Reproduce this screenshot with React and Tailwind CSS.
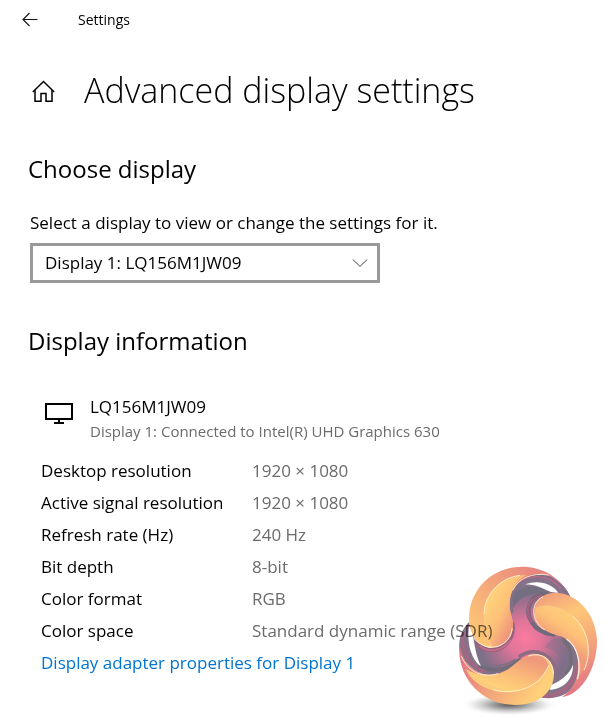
import { useState } from 'react';

const DISPLAYS = [{ id: '1', label: 'Display 1: LQ156M1JW09' }];

const DISPLAY_INFO = [
  { label: 'Desktop resolution', value: '1920 × 1080' },
  { label: 'Active signal resolution', value: '1920 × 1080' },
  { label: 'Refresh rate (Hz)', value: '240 Hz' },
  { label: 'Bit depth', value: '8-bit' },
  { label: 'Color format', value: 'RGB' },
  { label: 'Color space', value: 'Standard dynamic range (SDR)' },
];

function BackIcon() {
  return (
    <svg className="w-4 h-4" viewBox="0 0 16 16" fill="none" stroke="#111" strokeWidth="1.1">
      <path d="M15.5 7.5H1M7.5 1L1 7.5L7.5 14" />
    </svg>
  );
}

function HomeIcon() {
  return (
    <svg className="w-6 h-6" viewBox="0 0 24 24" fill="none" stroke="#000" strokeWidth="1.5">
      <path d="M.8 14L11.5 3.5L22.2 14" />
      <path d="M3 12V23.2H9V15.5H14V23.2H20V12" />
    </svg>
  );
}

function MonitorIcon() {
  return (
    <svg className="w-[30px] h-6" viewBox="0 0 30 24" fill="none" stroke="#000" strokeWidth="2">
      <path d="M2 3H28V18H2Z" />
      <path d="M15 18V22M10 22H20" />
    </svg>
  );
}

// Three-blade swirl laid over the bottom right corner
function SwirlLogo() {
  return (
    <svg className="w-[164px] h-[168px]" viewBox="0 0 492 504" fill="none" aria-hidden="true">
      <defs>
        <radialGradient id="core" gradientUnits="userSpaceOnUse" cx="255" cy="265" r="165">
          <stop offset="0" stopColor="#fb7a9f" />
          <stop offset=".3" stopColor="#e2759a" />
          <stop offset=".6" stopColor="#a9708f" />
          <stop offset=".85" stopColor="#7d6f89" />
          <stop offset="1" stopColor="#857489" />
        </radialGradient>
        <linearGradient id="rimA" gradientUnits="userSpaceOnUse" x1="320" y1="60" x2="100" y2="230">
          <stop offset="0" stopColor="#e77f81" />
          <stop offset=".4" stopColor="#f09a7c" />
          <stop offset="1" stopColor="#fdc477" />
        </linearGradient>
        <linearGradient id="lobeA" gradientUnits="userSpaceOnUse" x1="140" y1="170" x2="225" y2="215">
          <stop offset="0" stopColor="#ffd07a" />
          <stop offset=".5" stopColor="#fdc078" />
          <stop offset="1" stopColor="#f0967b" />
        </linearGradient>
        <linearGradient id="rimB" gradientUnits="userSpaceOnUse" x1="310" y1="140" x2="430" y2="420">
          <stop offset="0" stopColor="#f3a07c" />
          <stop offset=".25" stopColor="#fec778" />
          <stop offset=".55" stopColor="#f6aa7a" />
          <stop offset="1" stopColor="#e37584" />
        </linearGradient>
        <linearGradient id="lobeB" gradientUnits="userSpaceOnUse" x1="400" y1="190" x2="345" y2="275">
          <stop offset="0" stopColor="#ffcf7a" />
          <stop offset=".5" stopColor="#fdc178" />
          <stop offset="1" stopColor="#f09b7b" />
        </linearGradient>
        <linearGradient id="rimC" gradientUnits="userSpaceOnUse" x1="65" y1="310" x2="280" y2="450">
          <stop offset="0" stopColor="#e07483" />
          <stop offset=".45" stopColor="#f09d7c" />
          <stop offset="1" stopColor="#ffd079" />
        </linearGradient>
        <linearGradient id="lobeC" gradientUnits="userSpaceOnUse" x1="260" y1="325" x2="225" y2="425">
          <stop offset="0" stopColor="#f09a7c" />
          <stop offset=".6" stopColor="#fbbd78" />
          <stop offset="1" stopColor="#ffd07a" />
        </linearGradient>
        <radialGradient id="shadow">
          <stop offset="0" stopColor="#555" />
          <stop offset=".35" stopColor="#888" stopOpacity=".8" />
          <stop offset=".7" stopColor="#bbb" stopOpacity=".4" />
          <stop offset="1" stopColor="#fff" stopOpacity="0" />
        </radialGradient>
      </defs>

      <ellipse cx="208" cy="464" rx="145" ry="34" fill="url(#shadow)" />

      {/* core and the dark arms */}
      <g strokeLinecap="round">
        <path
          d="M88 215C65 235 52 275 60 305C85 365 140 390 200 370L300 442C340 452 385 435 408 405C450 350 435 280 360 240L390 138C370 95 330 68 285 68C230 72 200 120 208 180L205 270L150 294C110 285 88 250 88 215Z"
          fill="url(#core)"
        />
        <path d="M216 185C205 140 228 90 285 78C330 73 370 105 385 138" stroke="#82708a" strokeWidth="9" />
        <path d="M218 145C232 108 280 94 335 132C290 124 245 128 218 175Z" fill="#746f80" />
        <path d="M222 110C250 75 320 65 360 112" stroke="#b56a88" strokeWidth="5" />
        <path d="M318 133C270 132 252 180 276 217C290 241 310 250 340 254" stroke="#73697d" strokeWidth="13" />
        <path d="M306 137C257 145 256 190 275 215" stroke="#a7607f" strokeWidth="6" />
        <path d="M218 222C225 275 180 311 135 298C105 290 90 260 86 230" stroke="#96647f" strokeWidth="12" />
        <path d="M211 270C185 310 140 305 120 289" stroke="#c96b89" strokeWidth="5" />
        <path d="M238 330C205 362 158 366 120 350" stroke="#706c79" strokeWidth="12" />
        <path d="M225 330C205 343 180 352 150 346" stroke="#847085" strokeWidth="7" />
        <path d="M70 250C60 300 88 350 135 365" stroke="#a66583" strokeWidth="9" />
        <path d="M240 318C285 290 340 310 350 370" stroke="#8b6c82" strokeWidth="10" />
        <path d="M315 292C370 305 375 350 348 395C400 370 405 305 368 268C350 260 330 265 315 292Z" fill="#7c708a" opacity=".4" />
        <path d="M370 270C399 298 400 345 380 370" stroke="#746e79" strokeWidth="10" />
        <path d="M312 437C355 443 408 405 412 340" stroke="#a36883" strokeWidth="12" />
      </g>

      {/* gaps between the arms */}
      <path d="M255 103C295 89 334 99 355 128C320 131 312 105 255 103Z" fill="#fff" />
      <path d="M87 228C80 275 92 328 123 349C106 315 103 275 98 252C95 240 90 232 87 228Z" fill="#fff" />
      <path d="M399 344C387 377 357 394 334 405L329 419C365 419 401 391 399 344Z" fill="#fff" />

      {/* upper left blade */}
      <path
        d="M388 136C362 82 306 50 245 50C150 52 85 125 87 210C90 259 118 291 154 293C196 290 221 255 219 225C218 199 208 192 209 158C213 105 254 66 312 72C344 80 370 104 388 136Z"
        fill="url(#rimA)"
      />
      <path
        d="M260 75C180 76 131 135 132 197C133 235 142 264 155 290C196 290 221 255 219 225C218 199 208 192 209 158C211 115 235 86 260 75Z"
        fill="url(#lobeA)"
      />
      <path d="M240 76C180 84 134 132 132 192" stroke="#fff2ce" strokeWidth="3" />
      <path d="M132 190C132 231 142 263 155 288" stroke="#fbd39a" strokeWidth="2" />
      <path d="M216 235C214 272 181 296 145 291C125 287 110 276 101 264" stroke="#fff0d3" strokeWidth="3" />
      <path d="M219 120C235 85 276 67 325 75" stroke="#ffe8bc" strokeWidth="3" />

      {/* right blade */}
      <path
        d="M350 128C302 127 276 161 285 201C294 235 325 249 358 257C398 268 422 315 414 362C411 391 397 418 366 442C430 431 472 349 471 270C467 190 413 132 350 128Z"
        fill="url(#rimB)"
      />
      <path
        d="M287 176C320 157 378 173 413 213C450 254 455 329 419 377C423 320 406 275 366 259C328 250 283 232 287 176Z"
        fill="url(#lobeB)"
      />
      <path d="M287 174C320 158 378 173 412 212" stroke="#fbc98c" strokeWidth="2" />
      <path d="M398 198C448 242 456 310 432 361" stroke="#fff1c8" strokeWidth="3" />
      <path d="M309 140C264 161 280 225 314 239" stroke="#fff0d5" strokeWidth="3" />
      <path d="M380 267C418 293 423 349 412 388" stroke="#fff0dc" strokeWidth="4" />

      {/* bottom blade */}
      <path
        d="M58 278C49 386 128 465 226 465C302 464 342 420 342 371C340 333 317 313 285 312C239 317 224 352 189 366C133 391 68 359 58 278Z"
        fill="url(#rimC)"
      />
      <path
        d="M77 357C106 417 183 438 244 421C288 408 315 377 326 345C318 324 302 313 285 312C239 317 224 352 189 366C150 383 107 375 77 357Z"
        fill="url(#lobeC)"
      />
      <path d="M85 365C108 397 147 413 185 418" stroke="#f6bd91" strokeWidth="2" />
      <path d="M160 420C240 438 305 403 326 346" stroke="#fff0c5" strokeWidth="3" />
      <path d="M64 318C84 369 130 384 174 371" stroke="#fff0d3" strokeWidth="3" />
      <path d="M265 318C304 305 339 328 340 373" stroke="#fff0d5" strokeWidth="3" />
    </svg>
  );
}

export default function App() {
  const [selectedDisplay, setSelectedDisplay] = useState('1');

  return (
    <div className="relative min-h-screen bg-white pb-8 text-black font-['Open_Sans','Noto_Sans',sans-serif] text-[17px] leading-6">

      {/* TITLE BAR */}
      <header className="flex items-center gap-10 h-10 pl-[22px]">
        <button type="button" aria-label="Back">
          <BackIcon />
        </button>
        <span className="text-sm">Settings</span>
      </header>

      <main className="px-7">
        <div className="flex items-center gap-7 pt-5 pl-1">
          <a href="#home" aria-label="Home">
            <HomeIcon />
          </a>
          <h1 className="text-[34px] leading-[60px] font-light whitespace-nowrap">Advanced display settings</h1>
        </div>

        {/* DISPLAY PICKER */}
        <section className="pt-[31px]">
          <h2 className="text-2xl leading-9">Choose display</h2>
          <label htmlFor="display" className="block pt-6 pl-0.5 whitespace-nowrap">
            Select a display to view or change the settings for it.
          </label>
          <div className="relative mt-2 ml-0.5 w-[350px] max-w-full">
            <select
              id="display"
              value={selectedDisplay}
              onChange={e => setSelectedDisplay(e.target.value)}
              className="block w-full h-10 appearance-none border-[3px] border-[#999] bg-white pl-3 pr-10"
            >
              {DISPLAYS.map(d => (
                <option key={d.id} value={d.id}>{d.label}</option>
              ))}
            </select>
            <svg
              className="pointer-events-none absolute right-3 top-4 w-4 h-2"
              viewBox="0 0 16 8"
              fill="none"
              stroke="#444"
            >
              <path d="M.7 .4L8 7.4L15.3 .4" />
            </svg>
          </div>
        </section>

        {/* DISPLAY DETAILS */}
        <section className="pt-10">
          <h2 className="text-2xl leading-9">Display information</h2>
          <div className="flex gap-4 pt-9 pl-4">
            <div className="pt-1.5">
              <MonitorIcon />
            </div>
            <div>
              <div>LQ156M1JW09</div>
              <div className="text-[15px] text-[#6b6b6b]">Display 1: Connected to Intel(R) UHD Graphics 630</div>
            </div>
          </div>

          <table className="mt-3 ml-[13px] text-left">
            <tbody>
              {DISPLAY_INFO.map(row => (
                <tr key={row.label} className="h-8">
                  <th scope="row" className="w-[211px] p-0 font-normal whitespace-nowrap">{row.label}</th>
                  <td className="p-0 text-[#6b6b6b] whitespace-nowrap">{row.value}</td>
                </tr>
              ))}
            </tbody>
          </table>
          <a href="#adapter" className="block w-fit ml-[13px] leading-8 text-[#0074d0]">
            Display adapter properties for Display 1
          </a>
        </section>
      </main>

      <div className="pointer-events-none absolute right-0 bottom-0 mix-blend-multiply">
        <SwirlLogo />
      </div>

    </div>
  );
}
